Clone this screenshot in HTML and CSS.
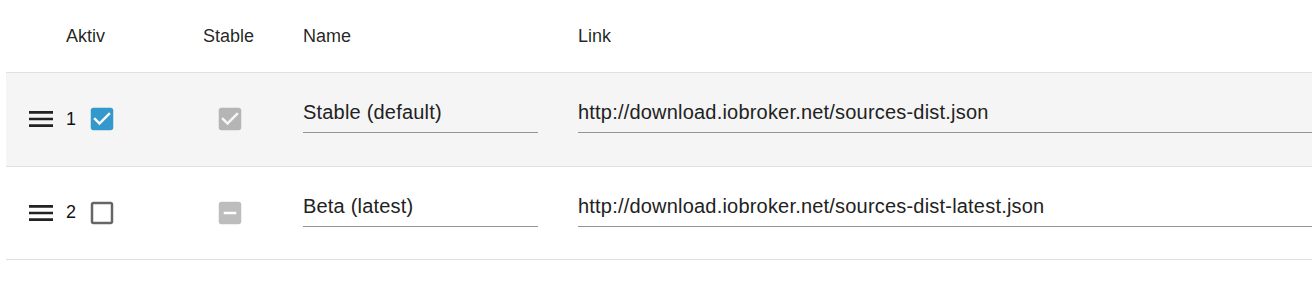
FILE: index.html
```html
<!DOCTYPE html>
<html lang="de">
<head>
<meta charset="utf-8">
<title>Quellen</title>
<link rel="stylesheet" href="styles.css">
</head>
<body>
<div class="table">
  <div class="row head">
    <div class="cell c-handle"></div>
    <div class="cell c-active">Aktiv</div>
    <div class="cell c-stable">Stable</div>
    <div class="cell c-name">Name</div>
    <div class="cell c-link">Link</div>
  </div>
  <div class="row item selected">
    <div class="cell c-handle">
      <svg class="menu" viewBox="0 0 24 24"><path d="M3 18h18v-2H3v2zm0-5h18v-2H3v2zm0-7v2h18V6H3z"/></svg>
    </div>
    <div class="cell c-active">
      <span class="num">1</span>
      <svg class="cb checked" viewBox="0 0 24 24"><path d="M19 3H5c-1.11 0-2 .9-2 2v14c0 1.1.89 2 2 2h14c1.11 0 2-.9 2-2V5c0-1.1-.89-2-2-2zm-9 14l-5-5 1.41-1.41L10 14.17l7.59-7.59L19 8l-7 7z"/></svg>
    </div>
    <div class="cell c-stable">
      <svg class="cb disabled" viewBox="0 0 24 24"><path d="M19 3H5c-1.11 0-2 .9-2 2v14c0 1.1.89 2 2 2h14c1.11 0 2-.9 2-2V5c0-1.1-.89-2-2-2zm-9 14l-5-5 1.41-1.41L10 14.17l7.59-7.59L19 8l-7 7z"/></svg>
    </div>
    <div class="cell c-name">
      <div class="field name-field">Stable (default)</div>
    </div>
    <div class="cell c-link">
      <div class="field link-field">http://download.iobroker.net/sources-dist.json</div>
    </div>
  </div>
  <div class="row item">
    <div class="cell c-handle">
      <svg class="menu" viewBox="0 0 24 24"><path d="M3 18h18v-2H3v2zm0-5h18v-2H3v2zm0-7v2h18V6H3z"/></svg>
    </div>
    <div class="cell c-active">
      <span class="num">2</span>
      <svg class="cb unchecked" viewBox="0 0 24 24"><path d="M19 5v14H5V5h14m0-2H5c-1.1 0-2 .9-2 2v14c0 1.1.9 2 2 2h14c1.1 0 2-.9 2-2V5c0-1.1-.9-2-2-2z"/></svg>
    </div>
    <div class="cell c-stable">
      <svg class="cb disabled" viewBox="0 0 24 24"><path d="M19 3H5c-1.1 0-2 .9-2 2v14c0 1.1.9 2 2 2h14c1.1 0 2-.9 2-2V5c0-1.1-.9-2-2-2zm-2 10H7v-2h10v2z"/></svg>
    </div>
    <div class="cell c-name">
      <div class="field name-field">Beta (latest)</div>
    </div>
    <div class="cell c-link">
      <div class="field link-field">http://download.iobroker.net/sources-dist-latest.json</div>
    </div>
  </div>
</div>
</body>
</html>
```
FILE: styles.css
```css
html, body {
  margin: 0;
  padding: 0;
  background: #ffffff;
  overflow: hidden;
}
body {
  font-family: "Liberation Sans", Arial, sans-serif;
  color: rgba(0, 0, 0, 0.87);
}
.table {
  margin-left: 6px;
  width: 1306px;
}
.row {
  display: grid;
  grid-template-columns: 60px 137px 100px 275px 1fr;
  border-bottom: 1px solid #e0e0e0;
}
.head {
  height: 72px;
  align-items: center;
  font-size: 18px;
  padding-top: 1px;
  box-sizing: border-box;
  height: 73px;
}
.item {
  height: 93.5px;
  box-sizing: border-box;
}
.selected {
  background: #f5f5f5;
}
.cell {
  display: flex;
  align-items: center;
}
.c-handle {
  padding-left: 19px;
}
.menu {
  width: 32px;
  height: 32px;
  fill: #222222;
}
.num {
  font-size: 18px;
  width: 21px;
  color: #111111;
}
.cb {
  width: 30px;
  height: 30px;
  flex: none;
}
.checked {
  fill: #3399cc;
}
.unchecked {
  fill: rgba(0, 0, 0, 0.6);
}
.disabled {
  fill: rgba(0, 0, 0, 0.26);
}
.item .c-stable {
  padding-left: 12px;
}
.item .c-name,
.item .c-link {
  align-items: flex-start;
  padding-top: 23px;
}
.field {
  font-size: 20px;
  line-height: 24px;
  padding: 4px 0 8px;
  border-bottom: 1px solid #949494;
  color: #222222;
  white-space: nowrap;
  overflow: hidden;
  letter-spacing: 0.2px;
}
.name-field {
  width: 235px;
}
.link-field {
  flex: 1;
}
```
